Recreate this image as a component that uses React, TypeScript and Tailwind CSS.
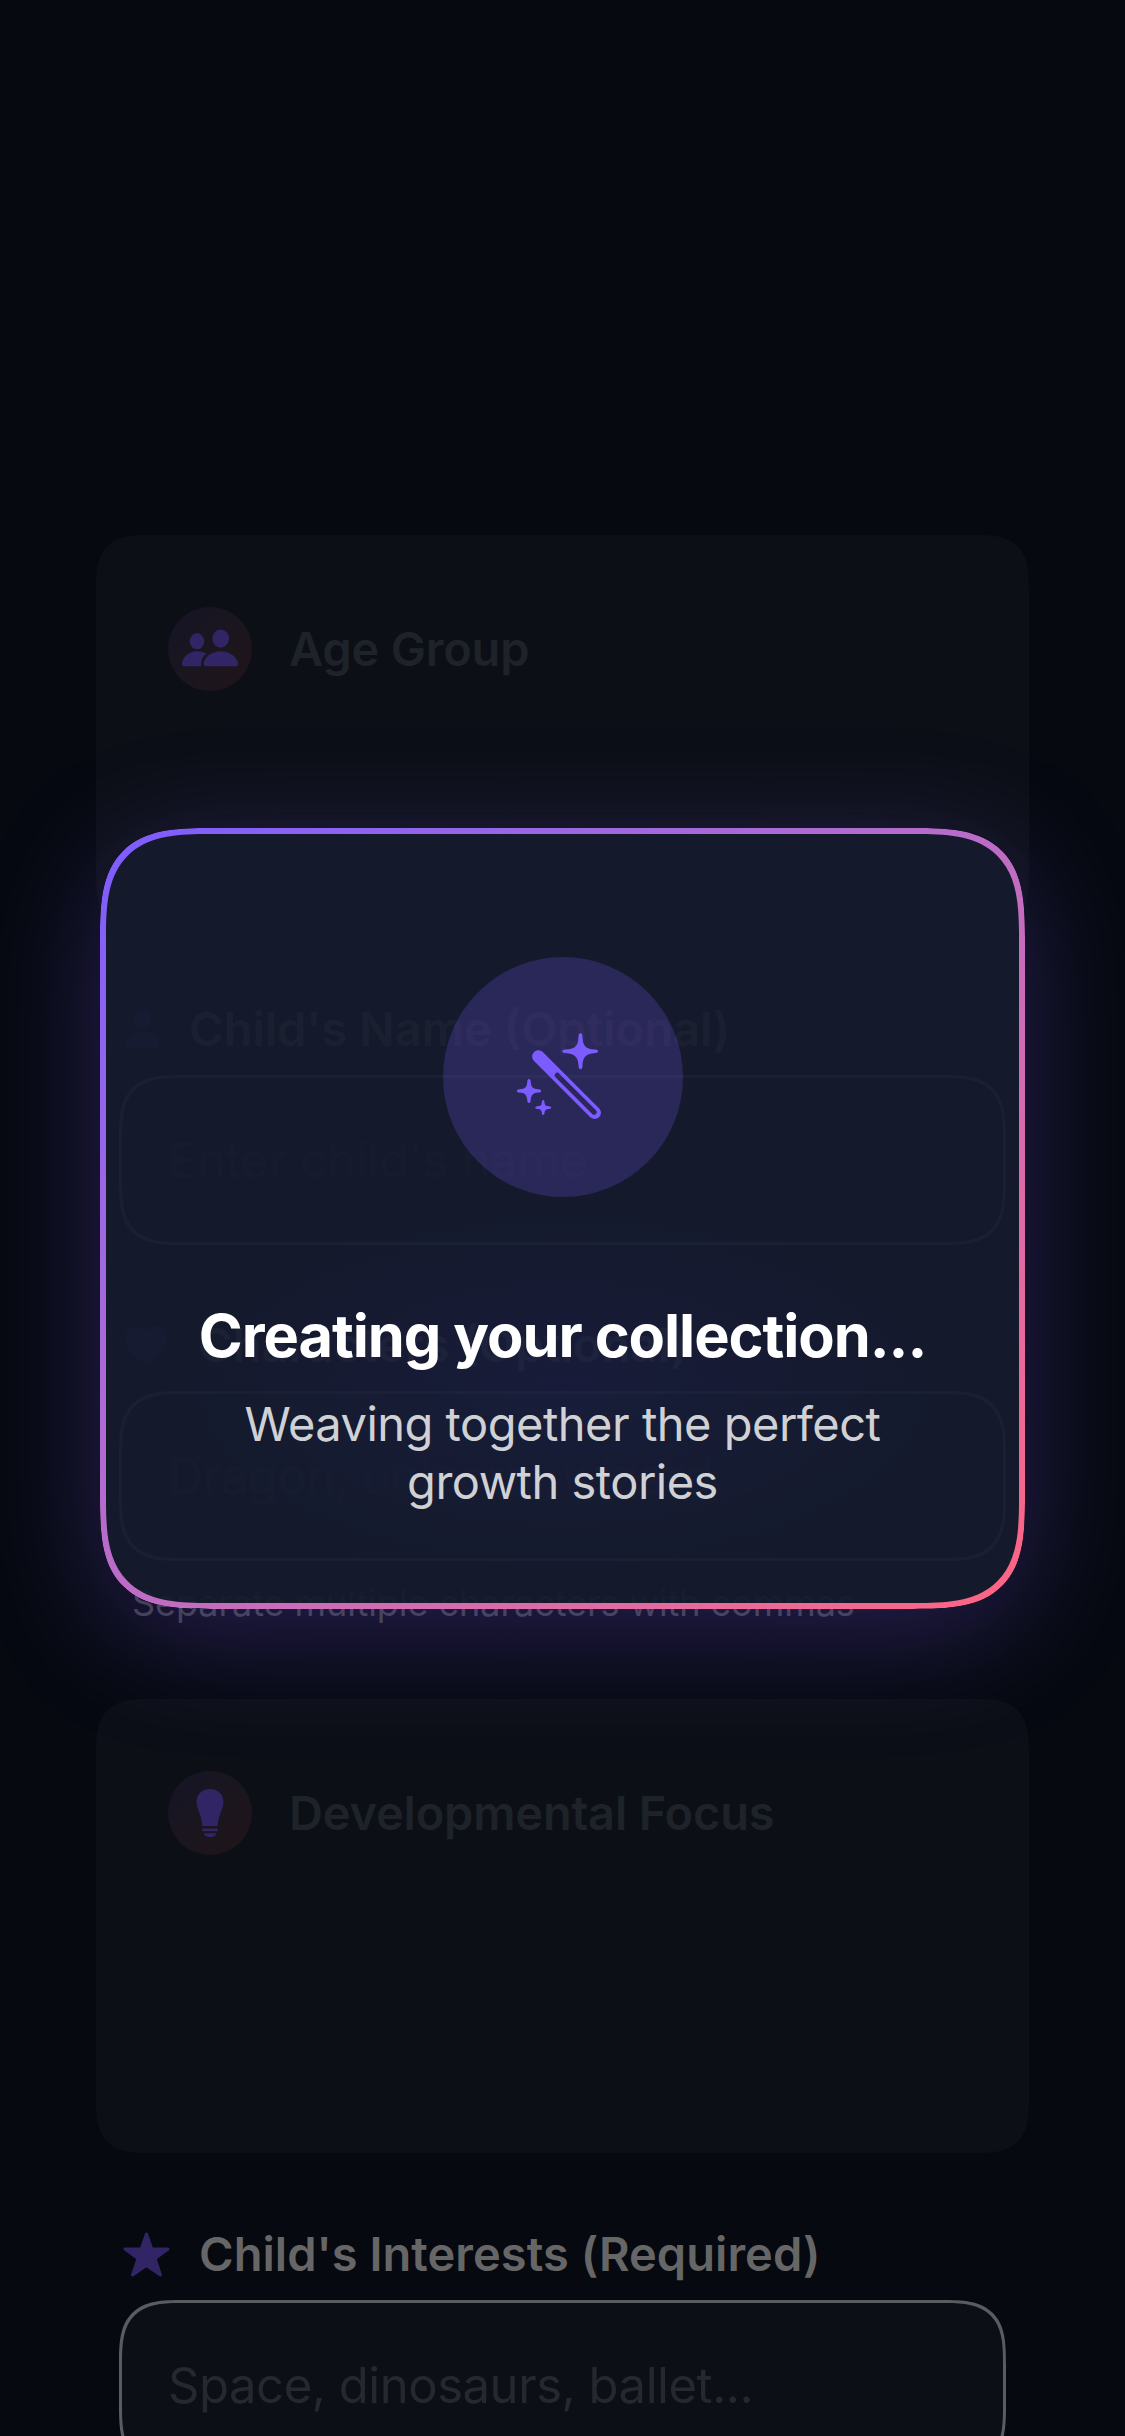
import React from "react";

const label = "font-semibold leading-none whitespace-nowrap relative -top-px";
const input =
  "ml-[119px] flex h-[170px] w-[887px] shrink-0 items-center rounded-[64px] [corner-shape:superellipse(1.6)] border-3 border-[#5a5c60] bg-[#0c0f16] px-[46px] pt-[2px] text-[49px] tracking-[-0.45px] text-[#25282d]";

function TwoPeople() {
  return (
    <svg width="58" height="40" viewBox="0 0 58 40" fill="#322566">
      <ellipse cx="16" cy="12.3" rx="7.3" ry="8" />
      <ellipse cx="39.7" cy="9.6" rx="8.3" ry="9.2" />
      <path d="M20 37.3H3.5Q1 37.3 1 34.8C1 29.5 7 22.3 16 22.3Q21.500 22.300 25.300 24.500Q20 29 20 35Z" />
      <path d="M25.500 37.300Q22.500 37.300 22.500 34.500C23 29 30 22.300 39.700 22.300S57 29.500 57 34.800Q57 37.300 54.500 37.300Z" />
    </svg>
  );
}

function Bulb() {
  return (
    <svg width="28" height="48" viewBox="0 0 28 48" fill="#322566">
      <path d="M14 0C6 0 .5 5.500 .5 13C.5 20 6 26 6.300 37H21.700C22 26 27.500 20 27.500 13C27.500 5.500 22 0 14 0Z" />
      <rect x="6.300" y="39.600" width="15.400" height="2.600" rx="1" />
      <path d="M8 44.200H20C20 46.500 17.500 48 14 48S8 46.500 8 44.200Z" />
    </svg>
  );
}

function Wand() {
  return (
    <svg className="mr-[8px] mb-[2px]" width="84" height="88" viewBox="0 0 84 88" fill="#7c5cff">
      <path d="M63.500 1.300C64.900 1.300 65.300 2.300 65.400 4C65.900 13 67.500 17.300 78 17.600C80.300 17.800 81 18.300 81 19.300S80.300 20.800 78 21C67.500 21.500 65.900 26.500 65.400 34.500C65.300 36.300 64.900 37.300 63.500 37.300S61.700 36.300 61.600 34.500C61.100 26.500 59.500 21.500 48 21C46 20.800 45.300 20.300 45.300 19.300S46 17.800 48 17.600C59.500 17.300 61.100 13 61.600 4C61.700 2.300 62.100 1.300 63.500 1.300Z" />
      <path d="M12 47C13.300 47 13.600 48 13.700 49.500C14 55.500 16 57 21.500 57.200C23.500 57.300 24 57.900 24 58.900S23.500 60.400 21.500 60.500C16 60.800 14 63 13.700 68.500C13.600 70 13.300 71 12 71S10.400 70 10.300 68.500C10 63 8 60.800 2.500 60.500C.5 60.400 0 59.900 0 58.900S.5 57.300 2.500 57.200C8 57 10 55.500 10.300 49.500C10.400 48 10.700 47 12 47Z" />
      <path d="M26.200 68C27.200 68 27.300 69 27.500 70.500C27.900 73.700 29 74 32 74.200C33.600 74.400 34.200 74.800 34.200 75.600S33.600 76.800 32 77C29 77.200 27.900 78 27.500 80.800C27.300 82.300 27.200 83 26.200 83S25 82.300 24.800 80.800C24.400 78 23.500 77.200 20.500 77C18.900 76.800 18.300 76.400 18.300 75.600S18.900 74.400 20.500 74.200C23.500 74 24.400 73.700 24.800 70.500C25 69 25.200 68 26.200 68Z" />
      <path fillRule="evenodd" d="M17.300 29.200C14.500 26.400 14.500 22.700 17 20.200C19.600 17.700 23.500 17.700 26.300 20.400L82 76.200C84.500 78.700 84.600 82.500 82.200 85S75.500 87.600 73 85.100ZM38 44.700L75.500 82.200C76.300 83 78 83 79 82S80 79.300 79.200 78.500L41.500 40.900C40.800 40.200 39.700 40.300 38.500 41.500S37.300 44 38 44.700Z" />
    </svg>
  );
}

function Section({ icon, title, className }: { icon: React.ReactNode; title: string; className: string }) {
  return (
    <section className={`mx-24 rounded-[52px] bg-[#0c0f16] px-[72px] pt-[72px] [corner-shape:superellipse(1.5)] ${className}`}>
      <div className="flex items-center gap-[37px]">
        <div className="flex size-[84px] items-center justify-center rounded-full bg-linear-to-br from-[#151526] to-[#201518]">
          {icon}
        </div>
        <h2 className={`${label} text-[47px] tracking-[-0.2px] text-[#1e2229]`}>{title}</h2>
      </div>
    </section>
  );
}

export default function App() {
  return (
    <main className="relative flex h-[2436px] w-[1125px] flex-col overflow-hidden bg-[#060910] pt-[535px] font-['Inter',sans-serif]">
      <Section className="h-[392px] shrink-0" title="Age Group" icon={<TwoPeople />} />

      <div className="mt-[76px] flex h-[52px] shrink-0 items-center gap-[30px] pl-[125px]">
        <svg width="34" height="38" viewBox="0 0 34 38" fill="#322566">
          <ellipse cx="17" cy="9" rx="8.500" ry="9" />
          <path d="M0 35C0 28 7 22 17 22S34 28 34 35Q34 38 31 38H3Q0 38 0 35Z" />
        </svg>
        <span className={`${label} text-[47px] text-[#666]`}>Child's Name (Optional)</span>
      </div>
      <div className={`mt-[20px] ${input}`}>Enter child's name</div>

      <div className="mt-[74px] flex h-[52px] shrink-0 items-center gap-[31px] pl-[125px]">
        <svg width="42" height="38" viewBox="0 0 42 38" fill="#322566">
          <path d="M21 38C8 30 0 22 0 12C0 5 5 0 11 0C15.500 0 19 2.500 21 6C23 2.500 26.500 0 31 0C37 0 42 5 42 12C42 22 34 30 21 38Z" />
        </svg>
        <span className={`${label} text-[47px] text-[#666]`}>Characters (Optional)</span>
      </div>
      <div className={`mt-[20px] ${input}`}>Dragon, unicorn, wizard...</div>
      <p className="mt-[20px] mb-[4px] ml-[132px] h-[44px] shrink-0 text-[36px] leading-[44px] tracking-[-0.05px] whitespace-nowrap text-[#3d3f44]">
        Separate multiple characters with commas
      </p>

      <Section className="mt-[70px] h-[454px] shrink-0" title="Developmental Focus" icon={<Bulb />} />

      <div className="mt-[75px] flex h-[52px] shrink-0 items-center gap-[29px] pl-[123px]">
        <svg width="47" height="45" viewBox="0 0 47 45" fill="#322566" stroke="#322566" strokeWidth="3" strokeLinejoin="round">
          <path d="M23.500 2L28.700 16.800L45 17L32 26.500L37.500 43L23.500 33.500L9.500 43L15 26.500L2 17L18.300 16.800Z" />
        </svg>
        <span className={`${label} text-[47px] tracking-[0.05px] text-[#666]`}>Child's Interests (Required)</span>
      </div>
      <div className={`mt-[20px] ${input}`}>Space, dinosaurs, ballet...</div>

      <div className="absolute top-[828px] left-[100px] flex h-[781px] w-[925px] flex-col items-center rounded-[112px] bg-[#151b2d]/93 bg-radial-[ellipse_45%_25%_at_50%_72%] from-[#4a40ff]/7 to-transparent pt-[129px] shadow-[0_24px_120px_rgba(124,92,255,0.28)] [corner-shape:superellipse(1.6)]">
        <div className="pointer-events-none absolute inset-0 rounded-[112px] bg-linear-to-br from-[#7c5cff] to-[#ff6482] [mask-image:linear-gradient(#000,#000),linear-gradient(#000,#000)] [mask-clip:content-box,border-box] p-[6px] [mask-composite:exclude] [corner-shape:superellipse(1.6)]" />
        <div className="flex size-[240px] items-center justify-center rounded-full bg-[#7c5cff]/22">
          <Wand />
        </div>
        <h1 className="mt-[100px] text-[59.5px] leading-[76px] font-bold tracking-[-1.05px] whitespace-nowrap text-white">
          Creating your collection...
        </h1>
        <p className="mt-[22px] text-center text-[47px] leading-[58px] tracking-[-0.5px] text-[#d0d1d5]">
          Weaving together the perfect
          <br />
          growth stories
        </p>
      </div>
    </main>
  );
}
